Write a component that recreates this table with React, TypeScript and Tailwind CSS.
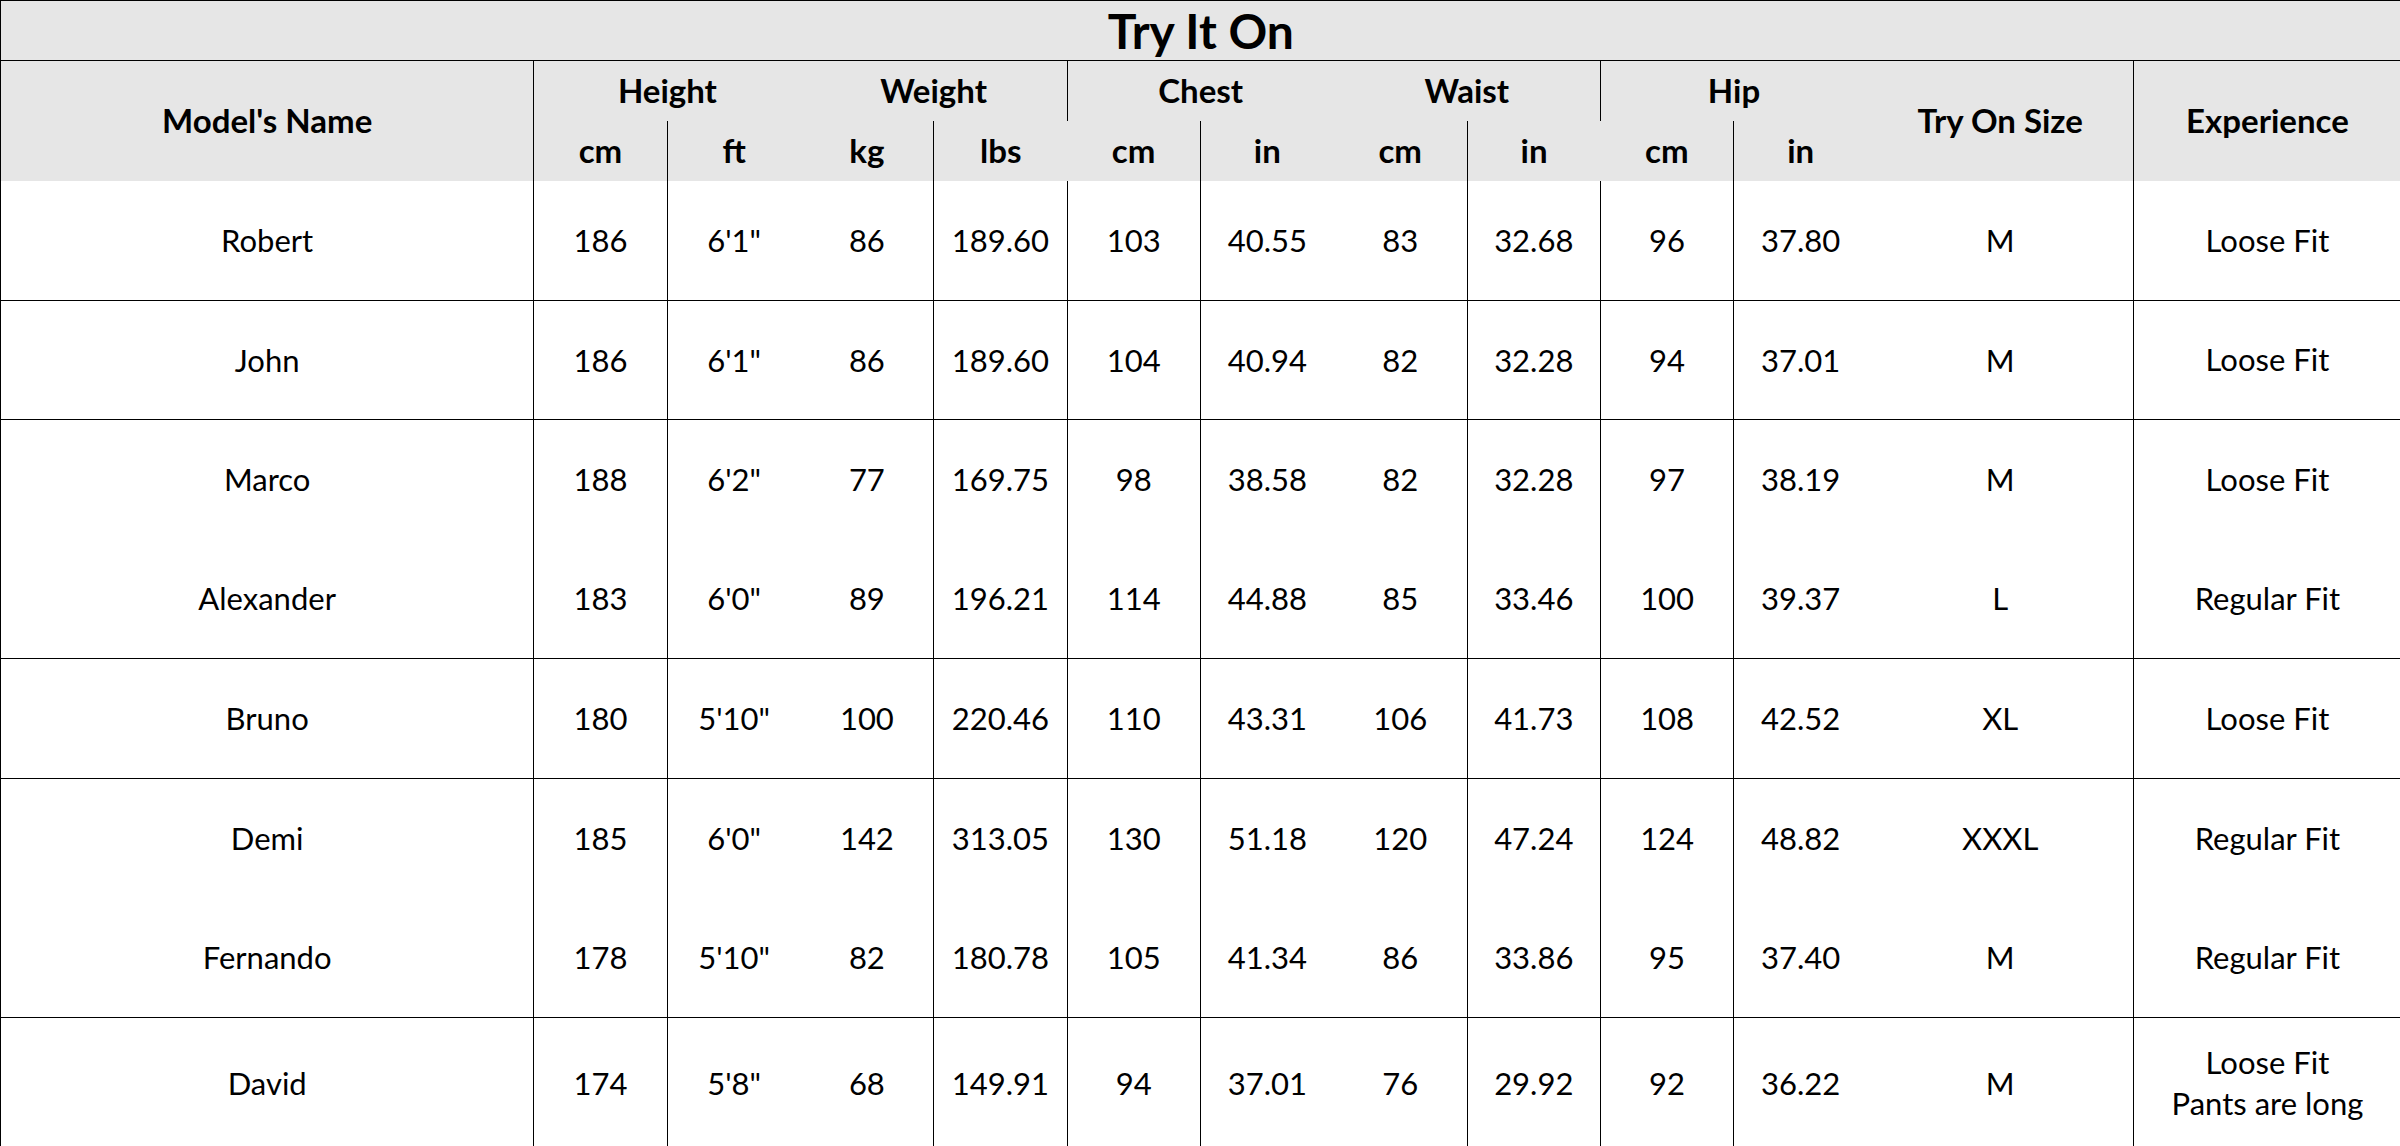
const rows = [
  { name: "Robert", v: ["186", "6'1\"", "86", "189.60", "103", "40.55", "83", "32.68", "96", "37.80"], size: "M", exp: ["Loose Fit"], line: true },
  { name: "John", v: ["186", "6'1\"", "86", "189.60", "104", "40.94", "82", "32.28", "94", "37.01"], size: "M", exp: ["Loose Fit"], line: true },
  { name: "Marco", v: ["188", "6'2\"", "77", "169.75", "98", "38.58", "82", "32.28", "97", "38.19"], size: "M", exp: ["Loose Fit"], line: false },
  { name: "Alexander", v: ["183", "6'0\"", "89", "196.21", "114", "44.88", "85", "33.46", "100", "39.37"], size: "L", exp: ["Regular Fit"], line: true },
  { name: "Bruno", v: ["180", "5'10\"", "100", "220.46", "110", "43.31", "106", "41.73", "108", "42.52"], size: "XL", exp: ["Loose Fit"], line: true },
  { name: "Demi", v: ["185", "6'0\"", "142", "313.05", "130", "51.18", "120", "47.24", "124", "48.82"], size: "XXXL", exp: ["Regular Fit"], line: false },
  { name: "Fernando", v: ["178", "5'10\"", "82", "180.78", "105", "41.34", "86", "33.86", "95", "37.40"], size: "M", exp: ["Regular Fit"], line: true },
  { name: "David", v: ["174", "5'8\"", "68", "149.91", "94", "37.01", "76", "29.92", "92", "36.22"], size: "M", exp: ["Loose Fit", "Pants are long"], line: false },
];

// which value columns get a left rule (Excel-style merged groups)
const leftRule = [true, true, false, true, true, true, false, true, true, true];

const cols = Array.from({ length: 18 });

export default function App() {
  return (
    <div className="bg-white text-black" style={{ fontFamily: "Lato, 'Open Sans', sans-serif" }}>
      <table className="table-fixed border-collapse w-[2400px] border-t border-l border-black">
        <colgroup>
          {cols.map((_, i) => (
            <col key={i} className="w-[133.33px]" />
          ))}
        </colgroup>
        <thead>
          <tr className="h-[60px] bg-[#e6e6e6]">
            <th colSpan={18} className="border-b border-black text-[48px] font-bold leading-none p-0">
              Try It On
            </th>
          </tr>
          <tr className="h-[60px] bg-[#e6e6e6] text-[33px] font-bold">
            <th colSpan={4} rowSpan={2} className="border-r border-black p-0">Model's Name</th>
            <th colSpan={2} className="p-0">Height</th>
            <th colSpan={2} className="border-r border-black p-0">Weight</th>
            <th colSpan={2} className="p-0">Chest</th>
            <th colSpan={2} className="border-r border-black p-0">Waist</th>
            <th colSpan={2} className="p-0">Hip</th>
            <th colSpan={2} rowSpan={2} className="border-r border-black p-0">Try On Size</th>
            <th colSpan={2} rowSpan={2} className="p-0">Experience</th>
          </tr>
          <tr className="h-[60px] bg-[#e6e6e6] text-[33px] font-bold">
            <th className="p-0">cm</th>
            <th className="border-l border-black p-0">ft</th>
            <th className="p-0">kg</th>
            <th className="border-l border-black p-0">lbs</th>
            <th className="p-0">cm</th>
            <th className="border-l border-black p-0">in</th>
            <th className="p-0">cm</th>
            <th className="border-l border-black p-0">in</th>
            <th className="p-0">cm</th>
            <th className="border-l border-black p-0">in</th>
          </tr>
        </thead>
        <tbody className="text-[31px] text-center">
          {rows.map((r) => (
            <tr key={r.name} className={r.exp.length > 1 ? "h-[132px]" : "h-[119.5px]"}>
              <td colSpan={4} className={r.line ? "border-b border-black p-0" : "p-0"}>{r.name}</td>
              {r.v.map((val, i) => (
                <td
                  key={i}
                  className={
                    (leftRule[i] ? "border-l " : "") + (r.line ? "border-b " : "") + "border-black p-0"
                  }
                >
                  {val}
                </td>
              ))}
              <td colSpan={2} className={r.line ? "border-b border-black p-0" : "p-0"}>{r.size}</td>
              <td colSpan={2} className={(r.line ? "border-b " : "") + "border-l border-black p-0 leading-[41px]"}>
                {r.exp.map((e) => (
                  <div key={e}>{e}</div>
                ))}
              </td>
            </tr>
          ))}
        </tbody>
      </table>
    </div>
  );
}
